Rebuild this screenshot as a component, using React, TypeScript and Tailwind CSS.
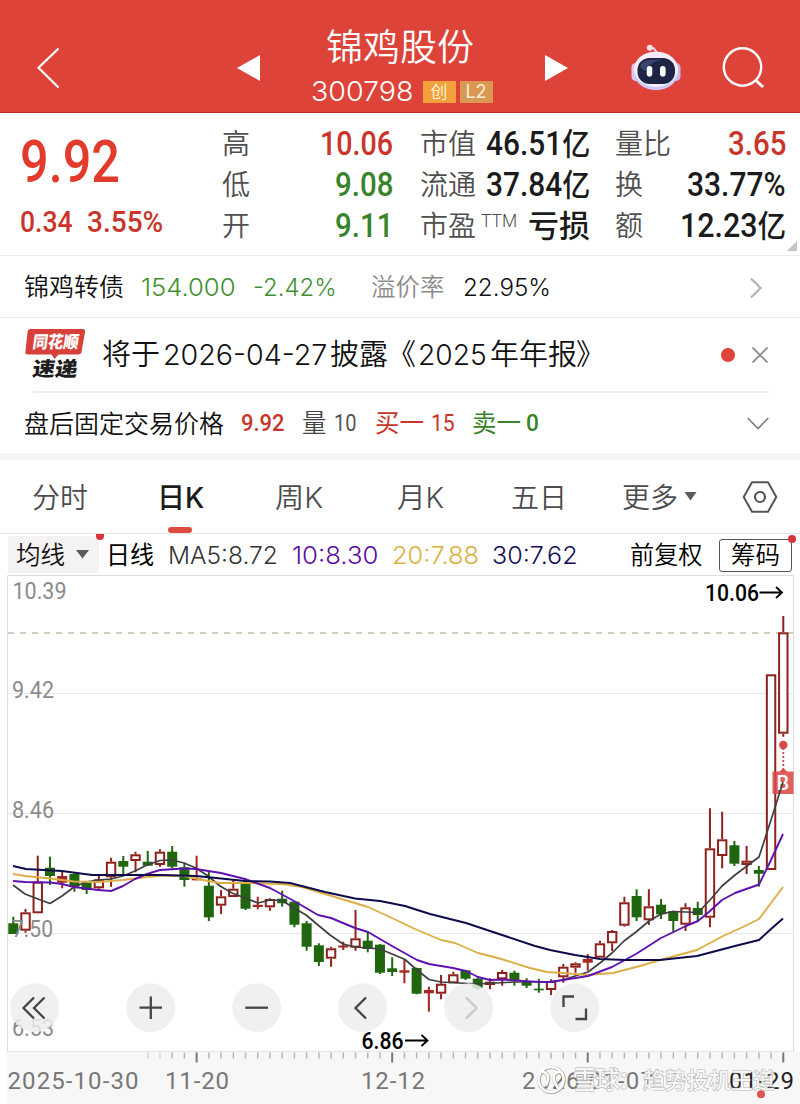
import { useLayoutEffect, useRef, useState, type ReactNode } from 'react';

const DIN = "font-[Roboto,'Noto_Sans_CJK_SC',sans-serif]";
const SF = "font-[Inter,'Noto_Sans_CJK_SC',sans-serif]";

/** One line of text, condensed or widened to fill the width of its box. */
function Fit({ className = '', children }: { className?: string; children: ReactNode }) {
  const box = useRef<HTMLSpanElement>(null);
  const text = useRef<HTMLSpanElement>(null);
  const [scale, setScale] = useState(1);
  useLayoutEffect(() => {
    if (box.current && text.current) {
      setScale(box.current.clientWidth / text.current.offsetWidth);
    }
  }, []);
  return (
    <span ref={box} className={`flex shrink-0 leading-none ${className}`}>
      <span ref={text} className="block shrink-0 origin-left whitespace-nowrap" style={{ transform: `scaleX(${scale})` }}>
        {children}
      </span>
    </span>
  );
}

function Robot() {
  return (
    <svg width="52" height="50" viewBox="630 42 52 50" className="shrink-0">
      <path d="M649 47 Q656 46 656.5 53" fill="none" stroke="#f6d9e4" strokeWidth="2" />
      <circle cx="649.8" cy="46.8" r="3" fill="#f8dfe8" />
      <rect x="631.5" y="62" width="9" height="18" rx="4.5" fill="#d9c8f5" />
      <rect x="671.5" y="62" width="9" height="18" rx="4.5" fill="#c5b6ee" />
      <ellipse cx="656" cy="70" rx="22.5" ry="19.3" fill="#cfc9fb" />
      <ellipse cx="656" cy="68.3" rx="22" ry="17.6" fill="#f6edfa" />
      <rect x="637.5" y="57" width="37.5" height="26" rx="12" fill="#1d2445" />
      <path d="M640 66 Q642 58 654 58.5 H664 Q650 60 645 70 Z" fill="#3b456b" />
      <rect x="646.7" y="65" width="5.6" height="10.5" rx="2.8" fill="#fff" />
      <rect x="660" y="65" width="5.6" height="10.5" rx="2.8" fill="#fff" />
    </svg>
  );
}

function Header() {
  return (
    <header className="flex h-[113px] items-center border-b border-[#b5322c] bg-[#de4339] pt-[23px]">
      <svg width="24" height="42" viewBox="36 47 24 42" className="ml-9 shrink-0">
        <path d="M58.5 48.5 L38.5 67.8 L58.5 87.5" fill="none" stroke="#fff" strokeWidth="2.2" />
      </svg>
      <svg width="23" height="26" viewBox="0 0 23 26" className="ml-[177px] shrink-0">
        <path d="M0 13 L23 0 V26 Z" fill="#fff" />
      </svg>
      <div className="flex w-[285px] shrink-0 flex-col items-center">
        <Fit className={`mr-[5px] w-[148px] text-[37px] font-[350] text-white ${SF}`}>锦鸡股份</Fit>
        <div className="mt-[12px] mr-[2px] flex items-center">
          <Fit className={`w-[103px] text-[27.5px] font-[350] text-white ${SF}`}>300798</Fit>
          <span className={`ml-[9px] flex h-[22px] w-[33px] items-center justify-center bg-[#f1a03b] text-[17px] leading-none font-[350] text-[#fff6df] ${SF}`}>创</span>
          <span className={`ml-[4px] flex h-[22px] w-[33px] items-center justify-center bg-[#da9852] text-[18px] leading-none text-[#fff1d8] ${SF}`}>L2</span>
        </div>
      </div>
      <svg width="23" height="26" viewBox="0 0 23 26" className="shrink-0">
        <path d="M0 0 L23 13 L0 26 Z" fill="#fff" />
      </svg>
      <div className="ml-[62px] flex shrink-0">
        <Robot />
      </div>
      <svg width="44" height="44" viewBox="722 46 44 44" className="ml-10 shrink-0">
        <circle cx="742.5" cy="67" r="18.7" fill="none" stroke="#fff" strokeWidth="2.4" />
        <path d="M755.5 80 L763 87" stroke="#fff" strokeWidth="3" />
      </svg>
    </header>
  );
}

const label = 'ml-px mt-[3px] text-[28px] font-[350] text-[#4f4f4f]';
const num = 'text-[33px] font-medium';

function Yi({ children }: { children: ReactNode }) {
  return (
    <>
      {children}
      <span className="text-[31px]">亿</span>
    </>
  );
}

function Quote() {
  return (
    <section className={`relative flex h-[143px] border-b border-[#ececec] leading-none ${DIN}`}>
      <div className="w-[221px] shrink-0 pl-[20px]">
        <Fit className="mt-[19px] w-[100px] text-[59px] font-medium text-[#e23a2b]">9.92</Fit>
        <div className="mt-[17px] flex text-[29.5px] font-medium text-[#c9352b]">
          <Fit className="w-[53px]">0.34</Fit>
          <Fit className="ml-[14px] w-[76px]">3.55%</Fit>
        </div>
      </div>
      <div className="flex h-[123px] w-[172px] shrink-0 flex-col pt-[10px] *:flex *:h-[41px] *:shrink-0 *:items-center *:justify-between">
        <div><span className={label}>高</span><Fit className={`w-[73px] text-[#c9352b] ${num}`}>10.06</Fit></div>
        <div><span className={label}>低</span><Fit className={`w-[58px] text-[#39842a] ${num}`}>9.08</Fit></div>
        <div><span className={label}>开</span><Fit className={`w-[58px] text-[#39842a] ${num}`}>9.11</Fit></div>
      </div>
      <div className="ml-[26px] flex w-[171px] shrink-0 flex-col pt-[10px] *:flex *:h-[41px] *:shrink-0 *:items-center *:justify-between">
        <div><span className={label}>市值</span><Fit className={`w-[104px] text-[#1b1b1b] ${num}`}><Yi>46.51</Yi></Fit></div>
        <div><span className={label}>流通</span><Fit className={`w-[104px] text-[#1b1b1b] ${num}`}><Yi>37.84</Yi></Fit></div>
        <div>
          <span className={label}>市盈</span>
          <Fit className="mb-[7px] ml-[5px] w-[36px] text-[17.5px] font-light text-[#4a4a4a]">TTM</Fit>
          <Fit className="mt-[2px] ml-auto w-[62px] text-[31px] font-medium text-[#1b1b1b]">亏损</Fit>
        </div>
      </div>
      <div className="ml-[24px] flex w-[172px] shrink-0 flex-col pt-[10px] *:flex *:h-[41px] *:shrink-0 *:items-center *:justify-between">
        <div><span className={label}>量比</span><Fit className={`w-[58px] text-[#c9352b] ${num}`}>3.65</Fit></div>
        <div><span className={label}>换</span><Fit className={`w-[99px] text-[#1b1b1b] ${num}`}>33.77%</Fit></div>
        <div><span className={label}>额</span><Fit className={`w-[106px] text-[#1b1b1b] ${num}`}><Yi>12.23</Yi></Fit></div>
      </div>
      <svg width="11" height="11" viewBox="0 0 11 11" className="absolute right-[2px] bottom-[3px]">
        <path d="M10 0 V10 H0 Z" fill="#c4c4c4" />
      </svg>
    </section>
  );
}

function Bond() {
  return (
    <section className={`flex h-[62px] items-center border-b border-[#ececec] pt-[2px] ${SF}`}>
      <Fit className="ml-[24px] w-[100px] text-[25px] font-[350] text-[#111]">锦鸡转债</Fit>
      <Fit className="ml-[17px] w-[94px] text-[24.5px] font-[350] text-[#3f8f31]">154.000</Fit>
      <Fit className="ml-[18px] w-[84px] text-[24.5px] font-[350] text-[#3f8f31]">-2.42%</Fit>
      <Fit className="ml-[34px] w-[74px] text-[24.5px] font-[350] text-[#8b8b8b]">溢价率</Fit>
      <Fit className="ml-[18px] w-[88px] text-[24.5px] font-[350] text-[#111]">22.95%</Fit>
      <svg width="14" height="22" viewBox="0 0 14 22" className="ml-[198px] shrink-0">
        <path d="M2 1.5 L11.5 11 L2 20.5" fill="none" stroke="#b3b3b3" strokeWidth="2.2" />
      </svg>
    </section>
  );
}

function Brand() {
  return (
    <svg width="62" height="54" viewBox="24 328 62 54" className="ml-[24px] shrink-0">
      <path d="M30 329 H82.5 Q85.5 329 85 332 L81.5 352 Q81 354.5 78.5 354.5 H58.5 L54.5 359 L51.5 354.5 H28 Q25 354.5 25.4 352 L27.6 331.5 Q28 329 30 329 Z" fill="#d8403a" />
      <g transform="skewX(-8)" fontFamily="'Noto Sans CJK SC', sans-serif" fontWeight="900">
        <text x="81" y="348.5" fontSize="17" textLength="46" lengthAdjust="spacingAndGlyphs" fill="#fff">同花顺</text>
        <text x="84.5" y="376" fontSize="20" textLength="45" lengthAdjust="spacingAndGlyphs" fill="#1d1d1d">速递</text>
      </g>
    </svg>
  );
}

function News() {
  return (
    <section className={`flex h-[73px] items-center font-[350] text-[#111] ${SF}`}>
      <Brand />
      <Fit className="ml-[16px] w-[58px] text-[29px]">将于</Fit>
      <Fit className="ml-[3px] w-[164px] text-[29px]">2026-04-27</Fit>
      <Fit className="ml-[3px] w-[58px] text-[29px]">披露</Fit>
      <Fit className="-ml-px w-[29px] text-[29px]">《</Fit>
      <Fit className="ml-[2px] w-[69px] text-[29px]">2025</Fit>
      <Fit className="ml-[3px] w-[87px] text-[29px]">年年报</Fit>
      <Fit className="-ml-px w-[29px] text-[29px]">》</Fit>
      <span className="ml-auto size-[14px] shrink-0 rounded-full bg-[#de4339]" />
      <svg width="16" height="16" viewBox="0 0 16 16" className="mr-[32px] ml-[17px] shrink-0">
        <path d="M0.5 0.5 L15.5 15.5 M15.5 0.5 L0.5 15.5" stroke="#8d8d8d" strokeWidth="1.9" />
      </svg>
    </section>
  );
}

function AfterHours() {
  return (
    <section className={`mr-[31px] ml-[33px] flex h-[62px] items-center border-t-2 border-[#efefef] pt-px ${DIN}`}>
      <Fit className="-ml-[9px] mt-px w-[200px] text-[25px] font-[350] text-[#111]">盘后固定交易价格</Fit>
      <Fit className="ml-[17px] w-[44px] text-[24.5px] font-medium text-[#c9352b]">9.92</Fit>
      <Fit className="mt-px ml-[17px] w-[25px] text-[24.5px] font-[350] text-[#444]">量</Fit>
      <Fit className="ml-[7px] w-[23px] text-[24.5px] text-[#555]">10</Fit>
      <Fit className="mt-px ml-[18px] w-[49px] text-[24.5px] text-[#c9352b]">买一</Fit>
      <Fit className="ml-[7px] w-[24px] text-[24.5px] text-[#c9352b]">15</Fit>
      <Fit className="mt-px ml-[17px] w-[49px] text-[24.5px] text-[#39842a]">卖一</Fit>
      <Fit className="ml-[5px] w-[13px] text-[24.5px] font-medium text-[#39842a]">0</Fit>
      <svg width="22" height="13" viewBox="0 0 22 13" className="ml-auto shrink-0">
        <path d="M0.7 1 L11 11.5 L21.3 1" fill="none" stroke="#7d7d7d" strokeWidth="1.6" />
      </svg>
    </section>
  );
}

function Tabs() {
  const tab = 'mt-[2px] text-[28px] font-[350] text-[#4c4c4c]';
  return (
    <nav className={`flex h-[74px] items-center border-b border-[#e3e3e3] ${SF}`}>
      <Fit className={`ml-[32px] w-[56px] ${tab}`}>分时</Fit>
      <div className="relative ml-[69px] flex h-full shrink-0 items-center">
        <Fit className="mt-[2px] w-[47px] text-[28px] font-medium text-[#1b1b1b]">日K</Fit>
        <span className="absolute bottom-0 left-[11px] h-[6px] w-[24px] rounded-[3px] bg-[#de4a3f]" />
      </div>
      <Fit className={`ml-[71px] w-[48px] ${tab}`}>周K</Fit>
      <Fit className={`ml-[74px] w-[47px] ${tab}`}>月K</Fit>
      <Fit className={`ml-[67px] w-[56px] ${tab}`}>五日</Fit>
      <Fit className={`ml-[55px] w-[56px] ${tab}`}>更多</Fit>
      <svg width="13" height="9" viewBox="0 0 13 9" className="ml-[6px] shrink-0">
        <path d="M0.5 0 H12.5 L6.5 8.5 Z" fill="#5a5a5a" />
      </svg>
      <svg width="36" height="32" viewBox="0 0 36 32" className="ml-[45px] shrink-0">
        <path d="M10 1.3 H26 L34.3 16 L26 30.7 H10 L1.7 16 Z" fill="none" stroke="#555" strokeWidth="2" strokeLinejoin="round" />
        <circle cx="18" cy="16" r="5" fill="none" stroke="#555" strokeWidth="2.2" />
      </svg>
    </nav>
  );
}

function Averages() {
  return (
    <section className={`flex h-[41px] items-center text-[24.5px] font-[350] ${SF}`}>
      <div className="relative ml-[8px] flex h-[37px] w-[91px] shrink-0 items-center bg-[#f5f2f3]">
        <Fit className="mt-px ml-[8px] w-[49px] text-[#111]">均线</Fit>
        <svg width="13" height="9" viewBox="0 0 13 9" className="ml-[11px] shrink-0">
          <path d="M0 0 H13 L6.5 8.5 Z" fill="#5a5a5a" />
        </svg>
        <span className="absolute -top-[2px] -right-[5px] h-[6px] w-[8px] rounded-b-full bg-[#d8343a]" />
      </div>
      <Fit className="mt-[2px] ml-[7px] w-[48px] font-normal text-black">日线</Fit>
      <Fit className="mt-[2px] ml-[14px] w-[110px] text-[#333]">MA5:8.72</Fit>
      <Fit className="mt-[2px] ml-[14px] w-[86px] text-[#5c0ba0]">10:8.30</Fit>
      <Fit className="mt-[2px] ml-[14px] w-[87px] text-[#dcb03c]">20:7.88</Fit>
      <Fit className="mt-[2px] ml-[13px] w-[86px] text-[#120c57]">30:7.62</Fit>
      <Fit className="mt-[2px] ml-[52px] w-[73px] text-black">前复权</Fit>
      <div className="relative mt-px ml-[16px] flex h-[33px] w-[73px] shrink-0 items-center justify-center rounded-[3px] border-[1.5px] border-[#555]">
        <Fit className="w-[49px] text-black">筹码</Fit>
        <span className="absolute -top-[5px] -right-[5px] size-[8px] rounded-full bg-[#d8343a]" />
      </div>
    </section>
  );
}

type Kind = 'up' | 'down' | 'flat';

// Each session: high, body top, body bottom, low (vertical pixels), kind.
const sessions: [number, number, number, number, Kind][] = [
  [916.7, 923.3, 934, 934, 'down'], [909, 912.3, 930.7, 932.7, 'up'], [855.7, 881.7, 913.3, 913.3, 'up'],
  [856.7, 867.7, 876, 885, 'down'], [870.7, 876, 882.7, 888.3, 'flat'], [873.3, 874, 886.7, 891.7, 'down'],
  [881.7, 882.7, 890, 894, 'down'], [875, 879.3, 888.3, 890, 'up'], [857.7, 861.7, 877.3, 886.7, 'up'],
  [856, 861, 866.7, 875, 'down'], [851.7, 854.3, 861, 872.3, 'up'], [851, 861.7, 865.7, 865.7, 'down'],
  [849.3, 851.7, 865, 866.7, 'up'], [846, 851.7, 866.7, 868.3, 'down'], [862.7, 867.3, 880, 886.7, 'down'],
  [855.7, 878.3, 880.3, 880.3, 'flat'], [871.7, 885.7, 917.3, 921, 'down'], [890, 896.3, 905.7, 914, 'up'],
  [880, 888.7, 897, 897, 'up'], [878.3, 883.3, 908.7, 910, 'down'], [896.7, 904.8, 907, 909.3, 'flat'],
  [898.3, 899, 907.3, 910.7, 'up'], [890.7, 898.7, 903.3, 906.7, 'down'], [901, 901.7, 924.7, 927.3, 'down'],
  [921, 923.3, 946.7, 950.7, 'down'], [943.3, 945.3, 962, 966, 'down'], [946.7, 948.3, 958.7, 966.7, 'up'],
  [941.7, 945.5, 947.5, 950, 'flat'], [910, 938.3, 947.7, 950.7, 'up'], [931.7, 940.7, 949, 952.3, 'down'],
  [944, 944.7, 972.7, 974, 'down'], [957.3, 968.3, 972, 976, 'down'], [960, 970.3, 972.7, 983.3, 'flat'],
  [967.7, 968, 993.7, 994.3, 'down'], [986.7, 990, 993.3, 1011.7, 'flat'], [975, 983.7, 993.7, 999.3, 'up'],
  [971.7, 974.3, 983.3, 983.3, 'up'], [970, 970.3, 978.7, 980, 'down'], [977.3, 978.7, 988.3, 990, 'down'],
  [978.3, 981.7, 985, 989.3, 'up'], [970, 972, 979.3, 985.7, 'up'], [970.7, 972.7, 980, 985.7, 'down'],
  [978.3, 981.7, 985.7, 988, 'down'], [979, 988.7, 990.3, 992.7, 'down'], [979.3, 981, 990, 995, 'up'],
  [964, 966.7, 977.3, 982.7, 'up'], [962.3, 963.3, 967.7, 972.7, 'up'], [954, 959, 962.7, 970.7, 'flat'],
  [940.7, 943.3, 957.7, 957.7, 'up'], [930, 931, 943.3, 951, 'up'], [896.7, 902.3, 925.7, 926.7, 'up'],
  [889.3, 896, 917.3, 921, 'down'], [889.3, 906.3, 920.3, 925, 'up'], [899, 904.7, 914.3, 919, 'down'],
  [910.7, 911, 921, 931.7, 'down'], [903.3, 907.3, 924.7, 931, 'up'], [901.7, 908, 915, 921.7, 'down'],
  [808.3, 848.3, 917.7, 927.3, 'up'], [811.7, 839.3, 856, 868.3, 'up'], [841, 845.3, 863.7, 866, 'down'],
  [846, 860.7, 865, 874, 'up'], [866, 870, 873.7, 886.7, 'down'], [674.3, 674.3, 870, 870, 'up'],
  [616, 632.3, 733.7, 736.7, 'up'],
];

const xOf = (i: number) => 13.3 + i * 12.222;

const ma5 = '13,885 25,894 38,899 50,903.5 62,896 74,887 86,882 98,880 111,879 123,876 135,871 147,865 160,860.5 172,860 184,863 196,868 208,876 220,886 232,893 245,898 258,903 270,900 282,900.5 294,908 306,915 318,925 330,935 343,944 355,947 380,949 392,954 405,959.5 417,970 429,979.5 441,982 478,984 515,982 551,981.5 563,980 575,976 588,972 600,963 612,953 624,941 636,932 649,921 661,914 673,911.5 698,912.5 710,900 722,886 735,875 747,866 759,857 771,820 783,782';
const ma10 = '13,881 25,882 50,882.5 62,884 74,887 98,890 111,891 123,886 135,879 147,874 160,870 184,868.5 196,869 221,873 245,879 270,888 294,901 318,915 331,918 355,928 368,932 392,946 417,960 429,964 453,968 466,971 478,977 490,980 502,979.5 539,982 551,982 563,980 588,976 612,967 636,954 661,938 686,926 698,921 710,911 722,900 735,893 759,884.5 771,860 783,834';
const ma20 = '13,874 25,876 50,878.5 74,881.5 98,882 123,880 147,877 165,875.5 184,876 208,881 220,883 245,883 282,884 302,887 325,894 345,900 368,907 392,918 415,929 441,940 455,943 478,953 498,958 530,968 547,972 563,973 587,975 613,973 640,966 660,960 697,950 723,936 743,927 759,919 771,903 783,887';
const ma30 = '13,866 26,869 62,871 92,875 160,875 196,876 221,878.5 245,881 270,881.5 290,883 325,892 355,898.5 380,901 405,906 430,914 466,923 490,931 535,946 550,950 575,955 600,959 625,960 660,960 697,956 735,946 759,940 771,929 783,918.5';

function Candle({ i }: { i: number }) {
  const [high, top, bottom, low, kind] = sessions[i];
  const x = xOf(i);
  const color = kind === 'down' ? '#1f660f' : kind === 'flat' ? '#a32620' : '#8f211c';
  if (kind === 'up') {
    return (
      <g stroke={color} strokeWidth="2">
        <path d={`M${x} ${high} V${top} M${x} ${bottom} V${low}`} />
        <rect x={x - 4.2} y={top + 1} width="8.4" height={Math.max(bottom - top - 2, 1)} fill="#fff" />
      </g>
    );
  }
  return (
    <g fill={color}>
      <rect x={x - 1} y={high} width="2" height={low - high} />
      <rect x={x - 5} y={top} width="10" height={bottom - top} />
    </g>
  );
}

const priceLabels: [string, number, number, number][] = [
  ['10.39', 12.5, 598.8, 54], ['9.42', 12, 697.8, 42], ['8.46', 12, 817.8, 42], ['7.50', 12, 936.8, 41], ['6.53', 12, 1035.8, 42],
];

const dateLabels: [string, number, number, string][] = [
  ['2025-10-30', 7.5, 131, '#777'], ['11-20', 165, 64, '#777'], ['12-12', 361, 64, '#777'],
  ['2026-01-07', 522, 132, '#777'], ['01-29', 729, 65, '#222'],
];

const icons: ReactNode[] = [
  <path key="0" d="M34 997.5 L23.5 1008 L34 1018.5 M44.5 997.5 L34 1008 L44.5 1018.5" />,
  <path key="1" d="M139.5 1007.7 H162 M150.8 996.5 V1019" />,
  <path key="2" d="M245.3 1007.7 H268" />,
  <path key="3" d="M366 997.5 L355.5 1008 L366 1018.5" />,
  <path key="4" d="M466 997.5 L476.5 1008 L466 1018.5" stroke="#c9c9c9" />,
  <path key="5" d="M563.5 1007 V996.5 H574 M586 1008.5 V1019 H575.5" />,
];
const buttonX = [34.7, 150.7, 256.6, 362.6, 468.7, 574.7];

function Chart() {
  return (
    <svg width="800" height="529" viewBox="0 575 800 529" className="block" fontFamily="Roboto, 'Noto Sans CJK SC', sans-serif">
      <rect x="7" y="1052" width="793" height="52" fill="#f7f7f7" />
      <path d="M7.5 1052 V575.5 H793.5 V1052" fill="none" stroke="#dcdcdc" />
      <path d="M7 1051.5 H794" stroke="#e4e4e4" />
      <path d="M8 693.5 H793 M8 813.5 H793 M8 933.5 H793" stroke="#e8e8e8" />
      <path d="M8 633 H793" stroke="#c8bba8" strokeWidth="1.3" strokeDasharray="6 6" />
      {sessions.map((_, i) => (
        <Candle key={i} i={i} />
      ))}
      {priceLabels.map(([t, x, y, w]) => (
        <text key={t} x={x} y={y} fontSize="24" textLength={w} lengthAdjust="spacingAndGlyphs" fill="#8b8b8b">{t}</text>
      ))}
      <g fill="none" strokeLinejoin="round">
        <path d="M783.3 748 V770" stroke="#d8484a" strokeWidth="1.8" strokeDasharray="2 2" />
        <circle cx="783.3" cy="745" r="4.2" fill="#d8484a" />
        <path d="M779.5 772 Q783.3 766 787 772 Z" fill="#d8484a" />
        <rect x="772.5" y="771.5" width="21" height="22.5" fill="#dc4a49" fillOpacity="0.88" />
      </g>
      <text x="776.5" y="790" fontSize="20" fontWeight="500" fill="#fff">B</text>
      <g fill="none" strokeLinejoin="round">
        <polyline points={ma5} stroke="#3f3f3f" strokeWidth="1.7" />
        <polyline points={ma20} stroke="#dcae45" strokeWidth="1.9" />
        <polyline points={ma10} stroke="#6012b0" strokeWidth="1.9" />
        <polyline points={ma30} stroke="#0e0b4c" strokeWidth="2" />
      </g>
      <g fill="#000" fontWeight="500" fontSize="24">
        <text x="705" y="601.3" textLength="54" lengthAdjust="spacingAndGlyphs">10.06</text>
        <text x="361.5" y="1049" textLength="42" lengthAdjust="spacingAndGlyphs">6.86</text>
      </g>
      <g fill="none" stroke="#000" strokeWidth="1.8">
        <path d="M759.5 592.5 H782 M776 587 L782 592.5 L776 598" />
        <path d="M405 1040.5 H427.5 M421.5 1035 L427.5 1040.5 L421.5 1046" />
      </g>
      {buttonX.map((x) => (
        <circle key={x} cx={x} cy="1007.7" r="24.4" fill="#ededed" fillOpacity="0.85" />
      ))}
      <g fill="none" stroke="#454545" strokeWidth="2.3">{icons}</g>
      {sessions.map((_, i) => {
        if (i < 11) return null;
        const major = i % 16 === 15;
        return (
          <path key={i} d={`M${xOf(i)} 1052.5 V${major ? 1062.5 : 1058.5}`} stroke={major ? '#777' : i < 13 ? '#d5d5d5' : '#b5b5b5'} strokeWidth={major ? 2 : 1.5} />
        );
      })}
      {dateLabels.map(([t, x, w, c]) => (
        <text key={t} x={x} y="1088.5" fontSize="24" textLength={w} lengthAdjust="spacing" fill={c}>{t}</text>
      ))}
      <g fill="none" stroke="#aaa" strokeWidth="3.6">
        <circle cx="551.5" cy="1080" r="12.5" />
        <path d="M542 1072 Q553 1074 546 1086 M561 1072 Q548 1074 559 1089" />
      </g>
      <g fill="none" stroke="#fff" strokeWidth="2.4">
        <circle cx="551" cy="1079.5" r="12.5" />
        <path d="M541.5 1071.5 Q552.5 1073.5 545.5 1085.5 M560.5 1071.5 Q547.5 1073.5 558.5 1088.5" />
      </g>
      <g fill="#fff" fillOpacity="0.85" stroke="#8f8f8f" strokeWidth="1.1" strokeOpacity="0.7" paintOrder="stroke">
        <text x="572.5" y="1088.5" fontSize="25" fontWeight="500" textLength="70" lengthAdjust="spacing">雪球：</text>
        <text x="643" y="1087.5" fontSize="22" fontWeight="500" textLength="132" lengthAdjust="spacing">趋势投机王道</text>
      </g>
      <circle cx="761" cy="1094.2" r="4" fill="#dc5652" />
    </svg>
  );
}

export default function App() {
  return (
    <main className="w-[800px] overflow-hidden bg-white">
      <Header />
      <Quote />
      <Bond />
      <News />
      <AfterHours />
      <div className="h-[7px] bg-[#f5f5f5]" />
      <Tabs />
      <Averages />
      <Chart />
    </main>
  );
}
